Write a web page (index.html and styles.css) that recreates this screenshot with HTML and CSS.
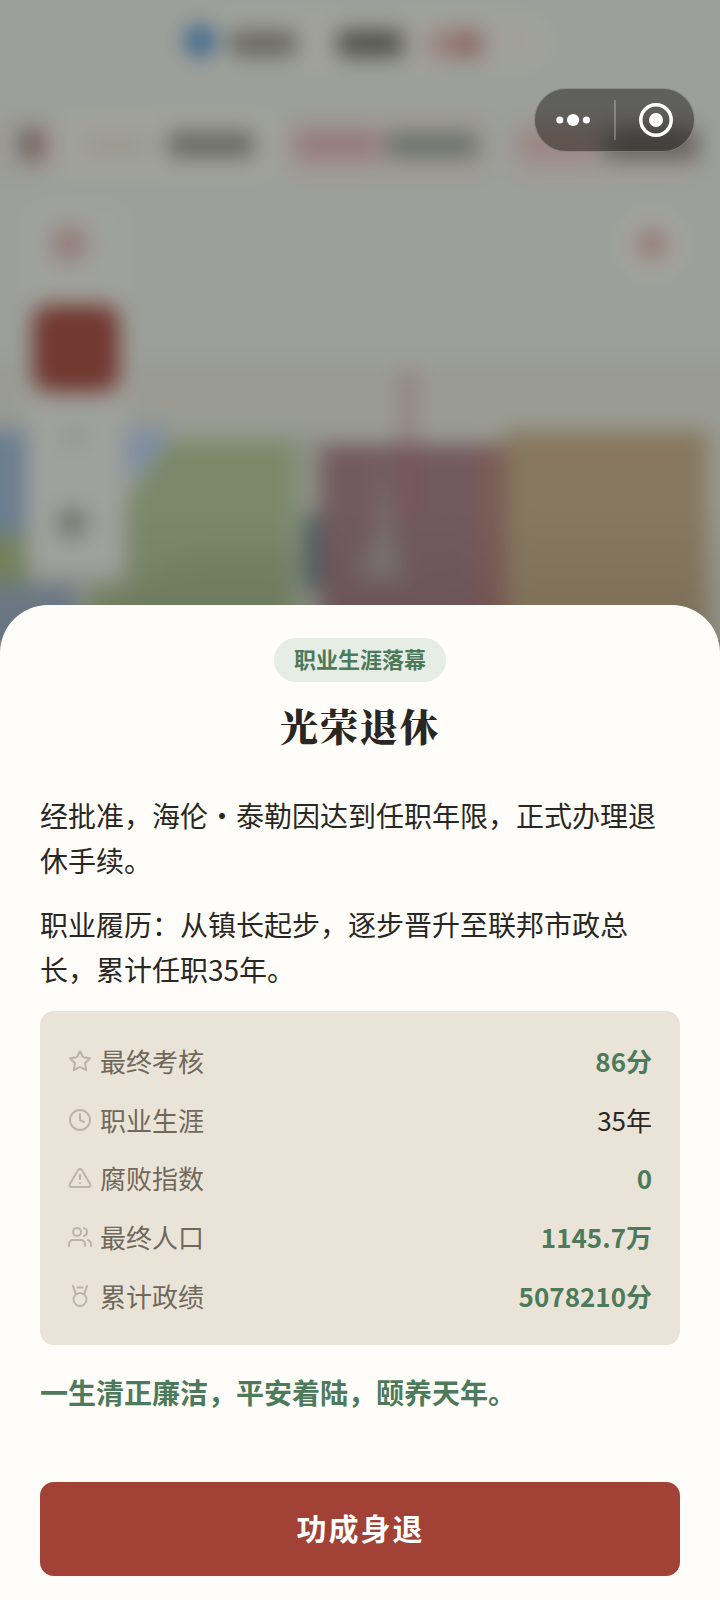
FILE: index.html
```html
<!DOCTYPE html>
<html lang="zh-CN">
<head>
<meta charset="utf-8">
<title>光荣退休</title>
<link rel="stylesheet" href="styles.css">
</head>
<body>
<div class="screen">
  <svg class="scene" viewBox="0 0 720 640" aria-hidden="true">
    <defs>
      <filter id="soft" filterUnits="userSpaceOnUse" x="-60" y="-60" width="840" height="760" color-interpolation-filters="sRGB"><feGaussianBlur stdDeviation="10.5"/></filter>
      <linearGradient id="shade" x1="0" y1="0" x2="0" y2="1"><stop offset="0.72" stop-color="#000" stop-opacity="0"/><stop offset="1" stop-color="#000" stop-opacity=".11"/></linearGradient>
    </defs>
    <rect width="720" height="640" fill="#9c9f9a"/>
    <g filter="url(#soft)">
      <rect x="-60" y="-60" width="840" height="422" fill="#9c9f9a"/>
      <rect x="-60" y="362" width="840" height="340" fill="#999b93"/>
      <!-- status pill -->
      <rect x="168" y="10" width="386" height="62" rx="31" fill="#a1a29b"/>
      <circle cx="200" cy="41" r="17" fill="#41698c"/>
      <rect x="230" y="31" width="66" height="25" rx="4" fill="#66665f"/>
      <rect x="338" y="30" width="65" height="27" rx="4" fill="#51514b"/>
      <rect x="429" y="30" width="26" height="28" rx="4" fill="#98807c"/>
      <rect x="455" y="30" width="27" height="28" rx="4" fill="#8b6865"/>
      <circle cx="518" cy="40" r="6" fill="#96958e"/>
      <!-- indicator chips -->
      <rect x="-20" y="116" width="64" height="62" rx="14" fill="#9d9c97"/>
      <rect x="20" y="128" width="13" height="32" fill="#5f625c"/><rect x="34" y="129" width="12" height="32" fill="#8a625f"/>
      <rect x="56" y="110" width="222" height="70" rx="16" fill="#a1a29b"/>
      <rect x="83" y="136" width="66" height="18" fill="#989891"/>
      <rect x="168" y="132" width="86" height="25" rx="4" fill="#676862"/>
      <rect x="290" y="114" width="200" height="66" rx="14" fill="#a09c96"/>
      <rect x="294" y="129" width="86" height="31" rx="3" fill="#967d7c"/>
      <rect x="386" y="131" width="92" height="28" rx="3" fill="#6f746e"/>
      <rect x="514" y="116" width="186" height="64" rx="14" fill="#a09b96"/>
      <rect x="518" y="129" width="78" height="30" rx="3" fill="#9b8582"/>
      <rect x="604" y="129" width="94" height="30" rx="3" fill="#63615d"/>
      <!-- map blocks -->
      <rect x="-40" y="430" width="66" height="104" fill="#6c7d90"/>
      <rect x="-40" y="534" width="68" height="50" fill="#768561"/>
      <rect x="-40" y="584" width="118" height="90" fill="#717e8b"/>
      <path d="M124 428h46l-12 32-32 22z" fill="#7f8ea2"/>
      <path d="M170 440H295V660H72L92 584H126V500Z" fill="#7b8869"/>
      <path d="M196 550h99v110H82l20-50z" fill="#768364"/>
      <rect x="297" y="437" width="20" height="220" fill="#8c9085"/>
      <rect x="304" y="515" width="24" height="74" fill="#4c6063"/>
      <rect x="320" y="444" width="188" height="220" fill="#725a60"/>
      <rect x="476" y="444" width="30" height="220" fill="#7b5b56"/>
      <path d="M382 455l12 85 12 40h-50l22-55z" fill="#7a7372"/>
      <rect x="401" y="370" width="14" height="150" fill="#8a4f58" opacity=".38"/>
      <rect x="506" y="431" width="202" height="240" fill="#87785f"/>
      <rect x="-60" y="0" width="840" height="700" fill="url(#shade)"/>
      <!-- side toolbar -->
      <rect x="26" y="204" width="100" height="370" rx="16" fill="#9fa19c"/>
      <circle cx="69" cy="244" r="17" fill="#937a77"/>
      <rect x="33" y="305" width="86" height="87" rx="16" fill="#713730"/>
      <path d="M66 442l16-10" stroke="#777a75" stroke-width="6"/>
      <circle cx="72" cy="523" r="15" fill="#72766e"/>
      <circle cx="652" cy="244" r="38" fill="#a2a39c"/>
      <circle cx="652" cy="244" r="14" fill="#957572"/>
    </g>
  </svg>

  <div class="capsule">
    <svg class="capsule-dots" width="30" height="14" viewBox="0 0 30 14"><circle cx="3.8" cy="7" r="3.5"/><circle cx="17.1" cy="7" r="6.1"/><circle cx="30.4" cy="7" r="3.5"/></svg>
    <span class="capsule-line"></span>
    <svg class="capsule-target" width="36" height="36" viewBox="0 0 36 36"><circle class="ring" cx="18" cy="18" r="15.2"/><circle cx="18" cy="18" r="7"/></svg>
  </div>

  <main class="sheet">
    <span class="badge">职业生涯落幕</span>
    <h1 class="title">光荣退休</h1>
    <div class="story">
      <p>经批准，海伦・泰勒因达到任职年限，正式办理退休手续。</p>
      <p>职业履历：从镇长起步，逐步晋升至联邦市政总长，累计任职35年。</p>
    </div>
    <div class="stats">
      <div class="row">
        <svg class="icon" viewBox="0 0 24 24"><path d="M12 2l3.09 6.26L22 9.27l-5 4.87 1.18 6.88L12 17.77l-6.18 3.25L7 14.14 2 9.27l6.91-1.01z"/></svg>
        <span class="label">最终考核</span><span class="value good">86分</span>
      </div>
      <div class="row">
        <svg class="icon" viewBox="0 0 24 24"><circle cx="12" cy="12" r="10"/><path d="M12 6v6l4 2"/></svg>
        <span class="label">职业生涯</span><span class="value">35年</span>
      </div>
      <div class="row">
        <svg class="icon" viewBox="0 0 24 24"><path d="M10.29 3.86L1.82 18a2 2 0 0 0 1.71 3h16.94a2 2 0 0 0 1.71-3L13.71 3.86a2 2 0 0 0-3.42 0zM12 9v4M12 17h.01"/></svg>
        <span class="label">腐败指数</span><span class="value good">0</span>
      </div>
      <div class="row">
        <svg class="icon" viewBox="0 0 24 24"><path d="M17 21v-2a4 4 0 0 0-4-4H5a4 4 0 0 0-4 4v2M23 21v-2a4 4 0 0 0-3-3.87M16 3.13a4 4 0 0 1 0 7.75"/><circle cx="9" cy="7" r="4"/></svg>
        <span class="label">最终人口</span><span class="value good">1145.7万</span>
      </div>
      <div class="row">
        <svg class="icon" viewBox="0 0 24 24"><circle cx="12" cy="15.5" r="6.5"/><path d="M7.8 10L5 2M16.2 10L19 2M9.5 3.5h5"/></svg>
        <span class="label">累计政绩</span><span class="value good">5078210分</span>
      </div>
    </div>
    <p class="verdict">一生清正廉洁，平安着陆，颐养天年。</p>
    <button class="confirm">功成身退</button>
  </main>
</div>
</body>
</html>
```
FILE: styles.css
```css
* { box-sizing: border-box; }
body {
  margin: 0;
  font-family: "Noto Sans CJK SC", sans-serif;
  color: #292723;
}
.screen {
  position: relative;
  display: flex;
  flex-direction: column;
  justify-content: flex-end;
  width: 720px;
  height: 1600px;
  overflow: hidden;
  background: #7b7c76;
}
.scene {
  position: absolute;
  inset: 0 0 auto 0;
  width: 720px;
  height: 640px;
}
.capsule {
  position: absolute;
  top: 88px;
  right: 25px;
  display: flex;
  align-items: center;
  width: 161px;
  height: 64px;
  padding-left: 21px;
  border: 1.5px solid rgba(190, 192, 188, .45);
  border-radius: 32px;
  background: rgba(6, 2, 0, .4);
  backdrop-filter: blur(6px);
  fill: #fff;
}
.capsule-dots { overflow: visible; }
.capsule-line {
  width: 2px;
  height: 40px;
  margin: 0 22px 0 28px;
  background: rgba(255, 255, 255, .25);
}
.capsule-target .ring { fill: none; stroke: #fff; stroke-width: 3.5; }
.sheet {
  position: relative;
  display: flex;
  flex-direction: column;
  align-items: center;
  height: 995.5px;
  padding: 33px 40px 24px;
  border-radius: 48px 48px 0 0;
  background: #fffdf9;
}
.badge {
  height: 44px;
  padding: 0 20px;
  border-radius: 22px;
  background: #e5ede5;
  color: #4c7a5a;
  font-size: 22px;
  font-weight: 700;
  line-height: 41px;
}
.title {
  margin: 16px 0 0;
  font-family: "Noto Serif CJK SC", "Noto Serif SC", "Source Han Serif SC", serif;
  font-size: 38px;
  font-weight: 900;
  line-height: 54px;
  letter-spacing: 2px;
}
.story {
  width: 100%;
  margin-top: 41.5px;
  font-size: 28px;
  line-height: 44.8px;
}
.story p { margin: 0 0 19.5px; }
.stats {
  width: 100%;
  padding: 20.5px 28px 20px;
  border-radius: 14px;
  background: #eae4d8;
  font-size: 26px;
}
.row { display: flex; align-items: center; height: 58.7px; }
.icon {
  width: 24px;
  height: 24px;
  margin-right: 8px;
  fill: none;
  stroke: #bcb4a6;
  stroke-width: 2;
  stroke-linecap: round;
  stroke-linejoin: round;
}
.label,
.value { padding-bottom: 1px; }
.label { color: #70685b; }
.value { margin-left: auto; }
.good { color: #4c7a5a; font-weight: 700; }
.verdict {
  width: 100%;
  margin: 25px 0 0;
  color: #4c7a5a;
  font-size: 28px;
  font-weight: 700;
  line-height: 44.8px;
}
.confirm {
  width: 100%;
  height: 94px;
  margin-top: auto;
  padding: 0 0 4px 1px;
  border: 0;
  border-radius: 14px;
  background: #a24135;
  color: #fff;
  font: 700 30px "Noto Sans CJK SC", sans-serif;
  letter-spacing: 2px;
}
```
